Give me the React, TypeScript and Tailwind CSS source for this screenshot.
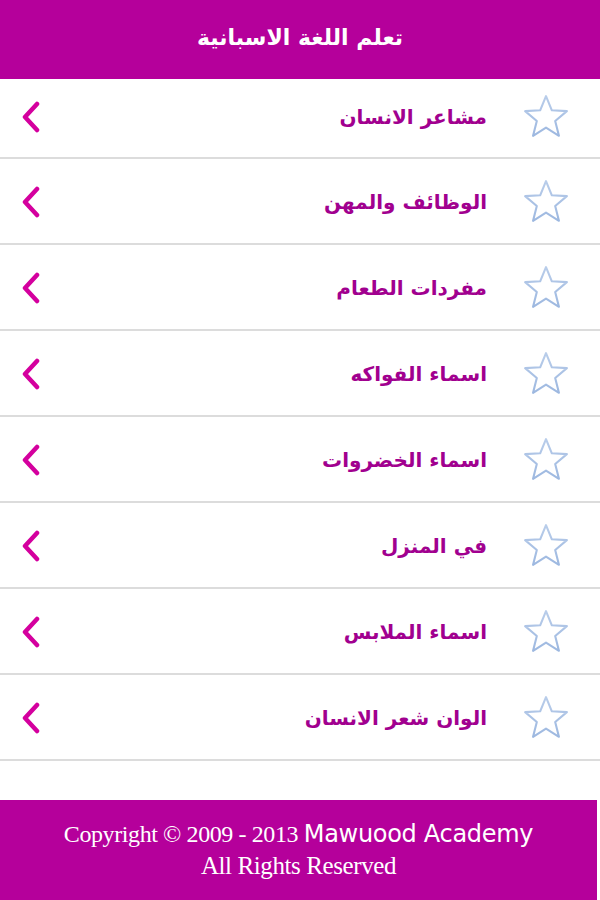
import React from 'react';

const topics = [
    'مشاعر الانسان',
    'الوظائف والمهن',
    'مفردات الطعام',
    'اسماء الفواكه',
    'اسماء الخضروات',
    'في المنزل',
    'اسماء الملابس',
    'الوان شعر الانسان',
];

function Star() {
    return (
        <svg width="48" height="48" viewBox="0 0 46 46" fill="none">
            <defs>
                <linearGradient id="starStroke" x1="0" y1="0" x2="0" y2="1">
                    <stop offset="0%" stopColor="#b9cdea" />
                    <stop offset="100%" stopColor="#9db8e0" />
                </linearGradient>
            </defs>
            <polygon
                points="23,3 28.6,16.6 43,17.4 31.8,26.8 35.4,41 23,33.2 10.6,41 14.2,26.8 3,17.4 17.4,16.6"
                stroke="url(#starStroke)"
                strokeWidth="2"
                strokeLinejoin="round"
                fill="#ffffff"
            />
        </svg>
    );
}

function Chevron() {
    return (
        <svg width="22" height="32" viewBox="0 0 22 32" fill="none">
            <polyline
                points="17,3 5,16 17,29"
                stroke="#d4009e"
                strokeWidth="4.5"
                strokeLinecap="round"
                strokeLinejoin="round"
            />
        </svg>
    );
}

export default function App() {
    return (
        <div className="w-[600px] h-[900px] bg-white flex flex-col overflow-hidden font-['DejaVu_Sans',sans-serif]">
            {/* Header */}
            <div className="h-[79px] bg-[#b5009b] flex items-center justify-center shrink-0">
                <h1 dir="rtl" className="text-white text-[22px] font-bold pb-1">تعلم اللغة الاسبانية</h1>
            </div>

            {/* Topic list */}
            <div className="flex-1 flex flex-col">
                {topics.map((t, i) => (
                    <div
                        key={t}
                        dir="rtl"
                        className={`flex items-center border-b-2 border-[#dcdcdc] pr-[30px] pl-[20px] ${i === 0 ? 'h-[80px] pb-[3px]' : 'h-[86px] pt-[1px]'}`}
                    >
                        <Star />
                        <span className="mr-[35px] text-[20px] font-bold text-[#a1008f] flex-1">{t}</span>
                        <Chevron />
                    </div>
                ))}
            </div>

            {/* Footer */}
            <div className="h-[100px] mr-[3px] bg-[#b5009b] flex flex-col items-center justify-center text-white shrink-0 pb-[2px]">
                <p className="leading-[30px] whitespace-nowrap">
                    <span className="font-['Liberation_Serif',serif] text-[24px] tracking-[-0.4px]">Copyright © 2009 - 2013 </span>
                    <span className="font-['DejaVu_Sans',sans-serif] text-[24px] tracking-[-0.3px]">Mawuood Academy</span>
                </p>
                <p className="font-['Liberation_Serif',serif] text-[25px] leading-[28px] tracking-[-0.4px]">All Rights Reserved</p>
            </div>
        </div>
    );
}
